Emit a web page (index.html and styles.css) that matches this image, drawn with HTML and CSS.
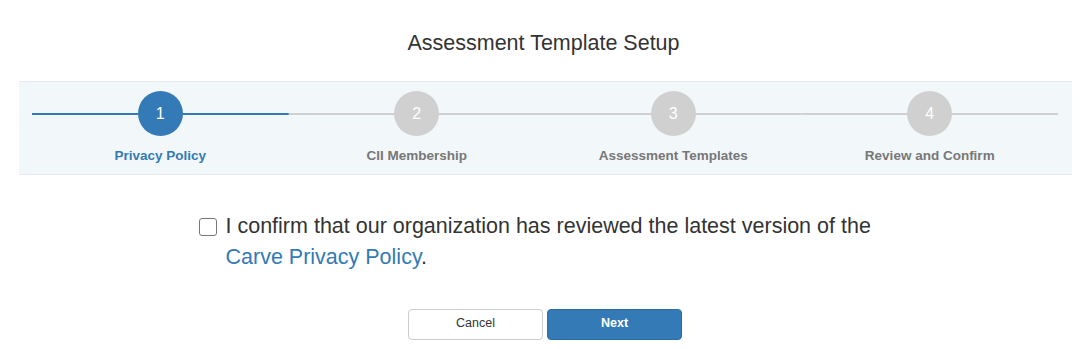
FILE: index.html
```html
<!doctype html>
<html lang="en">
  <head>
    <meta charset="UTF-8" />
    <meta name="viewport" content="width=device-width, initial-scale=1.0" />
    <title>Assessment Template Setup</title>
    <link rel="stylesheet" href="styles.css">
  </head>
  <body>
    <h1 class="page-title">Assessment Template Setup</h1>

    <!-- Wizard steps -->
    <div class="stepper">
      <div class="step done">
        <div class="step-track"><span class="step-circle">1</span></div>
        <div class="step-label">Privacy Policy</div>
      </div>
      <div class="step">
        <div class="step-track"><span class="step-circle">2</span></div>
        <div class="step-label">CII Membership</div>
      </div>
      <div class="step">
        <div class="step-track"><span class="step-circle">3</span></div>
        <div class="step-label">Assessment Templates</div>
      </div>
      <div class="step">
        <div class="step-track"><span class="step-circle">4</span></div>
        <div class="step-label">Review and Confirm</div>
      </div>
    </div>

    <div class="confirm">
      <input type="checkbox" id="confirm-policy" class="confirm-box" />
      <label for="confirm-policy" class="confirm-text">
        I confirm that our organization has reviewed the latest version of the
        <a href="#" class="link">Carve Privacy Policy</a>.
      </label>
    </div>

    <div class="actions">
      <button type="button" class="btn btn-default">Cancel</button>
      <button type="button" class="btn btn-primary">Next</button>
    </div>
  </body>
</html>
```

FILE: styles.css
```css
body {
  font-family: "Liberation Sans", Arial, sans-serif;
  margin: 0;
  padding: 0;
  background-color: #fff;
  color: #333;
}
.page-title {
  margin: 0;
  padding-top: 32px;
  height: 49px;
  font-size: 21.5px;
  font-weight: normal;
  line-height: 22px;
  text-align: center;
  color: #333;
}
/* Stepper */
.stepper {
  display: grid;
  grid-template-columns: repeat(4, 1fr);
  margin: 0 15px 0 19px;
  padding: 9px 14px 9px 13px;
  background: #f2f7fa;
  border-top: 1px solid #e6eaec;
  border-bottom: 1px solid #e6eaec;
}
.step {
  text-align: center;
}
.step-track {
  display: flex;
  justify-content: center;
  background: linear-gradient(#d0d0d0, #d0d0d0) center / 100% 2px no-repeat;
}
.step.done .step-track {
  background-image: linear-gradient(#337ab7, #337ab7);
}
.step-circle {
  width: 45px;
  height: 45px;
  border-radius: 50%;
  background: #d0d0d0;
  color: #fff;
  font-size: 16px;
  line-height: 45px;
}
.step.done .step-circle {
  background: #337ab7;
}
.step-label {
  margin-top: 11px;
  font-size: 13.5px;
  line-height: 18px;
  font-weight: bold;
  color: #777;
}
.step.done .step-label {
  color: #337ab7;
}
/* Confirmation */
.confirm {
  display: flex;
  justify-content: center;
  gap: 9px;
  margin-top: 36px;
  padding-right: 3px;
}
.confirm-box {
  appearance: none;
  -webkit-appearance: none;
  flex: none;
  width: 18px;
  height: 18px;
  margin: 7px 0 0;
  border: 1px solid #767676;
  border-radius: 3px;
  background: #fff;
}
.confirm-text {
  width: 660px;
  font-size: 21.5px;
  line-height: 31px;
  color: #333;
}
.link {
  color: #337ab7;
  text-decoration: none;
}
/* Buttons */
.actions {
  display: flex;
  justify-content: center;
  gap: 4px;
  margin-top: 36px;
  padding-left: 3px;
}
.btn {
  width: 135px;
  height: 31px;
  padding: 0 0 3px;
  font-family: inherit;
  font-size: 12.5px;
  border-radius: 4px;
  cursor: pointer;
}
.btn-default {
  background: #fff;
  color: #333;
  border: 1px solid #ccc;
}
.btn-primary {
  background: #337ab7;
  color: #fff;
  font-weight: bold;
  border: 1px solid #2e6da4;
}
```
